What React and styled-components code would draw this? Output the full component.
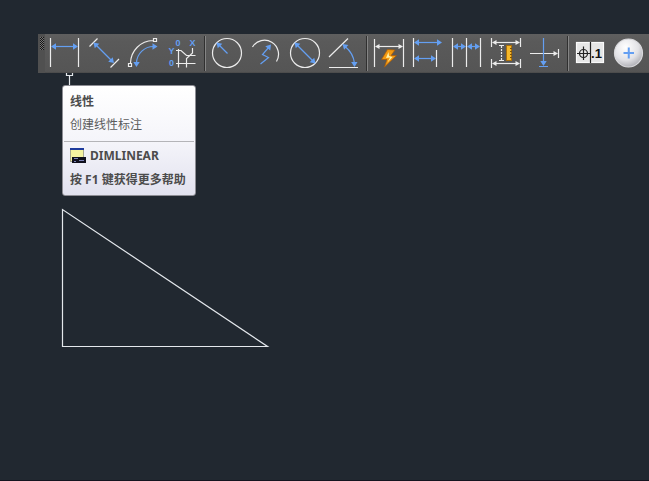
import React from "react";
import styled, { createGlobalStyle, ThemeProvider } from "styled-components";

const theme = {
  color: {
    canvas: "#212830",
    bar: "#5a5a5a",
    line: "#ececec",
    blue: "#649ff2",
    text: "#4c4c4c",
  },
};

const GlobalStyle = createGlobalStyle`
  body {
    background: ${theme.color.canvas};
    margin: 0;
  }
`;

const Workspace = styled.main`
  border-bottom: solid 1px #14141f;
  box-sizing: border-box;
  font-family: "Noto Sans", "Noto Sans CJK SC", sans-serif;
  min-height: 100vh;
  overflow: hidden;
  padding: 34px 0 0 38px;
  position: relative;
`;

const Drawing = styled.svg`
  height: 100%;
  left: 0;
  pointer-events: none;
  position: absolute;
  top: 0;
  width: 100%;
`;

const Toolbar = styled.div`
  background: linear-gradient(#5f5f5f, ${({ theme }) => theme.color.bar} 20%, #555 96%, #484848);
  display: flex;
  height: 39px;
  position: relative;
`;

const Grip = styled.div`
  background: #505050;
  box-sizing: border-box;
  flex: none;
  padding: 3px 2px;
  width: 7px;

  &::before {
    background: repeating-conic-gradient(#161616 0 25%, #757575 0 50%) 0 0 / 2px 2px;
    content: "";
    display: block;
    height: 13px;
    width: 4px;
  }
`;

const Separator = styled.div`
  background: #303030;
  border-right: solid 1px #858585;
  flex: none;
  margin: 2px 1px 2px 3px;
  width: 1px;
`;

const ToolItem = styled.div`
  flex: none;
  position: relative;
`;

const ToolButton = styled.button`
  background: none;
  border: none;
  cursor: pointer;
  display: block;
  height: 39px;
  padding: 0;
  width: 39px;
`;

const Icon = styled.svg`
  display: block;
  fill: none;
  height: 39px;
  stroke: ${({ theme }) => theme.color.line};
  stroke-width: 1.2;
  width: 39px;

  .blue {
    stroke: ${({ theme }) => theme.color.blue};
  }

  .head {
    fill: ${({ theme }) => theme.color.line};
    stroke: none;
  }

  .blue-head {
    fill: ${({ theme }) => theme.color.blue};
    stroke: none;
  }

  text {
    fill: ${({ theme }) => theme.color.blue};
    font: bold 9px "Liberation Sans", sans-serif;
    stroke: none;
    text-anchor: middle;
  }

  .value {
    fill: #111;
    font-size: 13px;
  }
`;

const Tooltip = styled.div`
  background: linear-gradient(#fff, #f5f5fa 50%, #e2e2ef);
  border: solid 1px #8d8d94;
  border-radius: 3px;
  box-sizing: border-box;
  color: ${({ theme }) => theme.color.text};
  font-size: 12px;
  left: 17px;
  line-height: 20px;
  padding: 6px 1px 5px;
  position: absolute;
  top: 51px;
  white-space: nowrap;
  width: 134px;
  z-index: 1;
`;

const TooltipTitle = styled.div`
  font-weight: 600;
  padding: 0 6px;
`;

const TooltipText = styled.div`
  color: #5c5c5c;
  padding: 3px 6px 0;
`;

const TooltipFooter = styled.div`
  border-top: solid 1px #b4b4b8;
  font-weight: 700;
  margin-top: 6px;
  padding: 4px 6px 0;
`;

const Command = styled.div`
  align-items: center;
  display: flex;
  gap: 4px;
  margin-bottom: 4px;
`;

const CommandIcon = styled.svg`
  flex: none;
  height: 16px;
  width: 16px;
`;

// Arrow head with its tip at x, y; an angle of 0 points right
const Head = ({ x, y, angle = 0, white }) => (
  <path
    className={white ? "head" : "blue-head"}
    d={white ? "M0 0L-4.5 -2.6V2.6Z" : "M0 0L-5 -3.2V3.2Z"}
    transform={`translate(${x} ${y}) rotate(${angle})`}
  />
);

const Span = ({ x1, x2, y, white }) => (
  <>
    <path className={white ? "" : "blue"} d={`M${x1 + 3} ${y}H${x2 - 3}`} />
    <Head angle={180} white={white} x={x1} y={y} />
    <Head white={white} x={x2} y={y} />
  </>
);

const groups = [
  [
    {
      label: "线性",
      hasTooltip: true,
      icon: (
        <>
          <path d="M5.5 4V33M33.5 4V33" />
          <Span x1={6} x2={33} y={12.5} />
        </>
      ),
    },
    {
      label: "对齐",
      icon: (
        <>
          <path d="M5.5 12.5L13.5 4.5M26.5 33.5L35 25" />
          <path className="blue" d="M12 11L28 27" />
          <Head angle={225} x={9.5} y={8.5} />
          <Head angle={45} x={30} y={29} />
        </>
      ),
    },
    {
      label: "弧长",
      icon: (
        <>
          <path d="M7.5 29A23 23 0 0 1 30 6.5M5.5 29.5h3v3h-3zM30.5 4.5h3v3h-3z" />
          <path className="blue" d="M13.5 29A17 17 0 0 1 31 12.5" />
          <Head angle={90} x={13.5} y={33} />
          <Head x={34.5} y={12.5} />
        </>
      ),
    },
    {
      label: "坐标",
      icon: (
        <>
          <path d="M16.5 15V33.5M14 16.5H19L24.5 21.5H33.5M14 29.5H33.5M24.5 33.5V24.5L30.5 19V14" />
          <text x="16" y="12">0</text>
          <text x="30.5" y="12">X</text>
          <text x="9.5" y="20">Y</text>
          <text x="9.5" y="32">0</text>
        </>
      ),
    },
  ],
  [
    {
      label: "半径",
      icon: (
        <>
          <circle cx="20" cy="19" r="14.5" />
          <path className="blue" d="M20.5 19.5L12 11" />
          <Head angle={225} x={9.5} y={8.5} />
        </>
      ),
    },
    {
      label: "折弯",
      icon: (
        <>
          <path d="M6.5 13A14 14 0 1 1 30.5 27.5" />
          <path className="blue" d="M14.5 30L22.5 23.5L16.5 20.5L23 13" />
          <Head angle={-50} x={25} y={10.5} />
        </>
      ),
    },
    {
      label: "直径",
      icon: (
        <>
          <circle cx="20" cy="19" r="14.5" />
          <path className="blue" d="M12 11L28 27" />
          <Head angle={225} x={9.5} y={8.5} />
          <Head angle={45} x={30.5} y={29.5} />
        </>
      ),
    },
    {
      label: "角度",
      icon: (
        <>
          <path d="M5 23L24 4.5M5 33.5H34" />
          <path className="blue" d="M21 12.5A25 25 0 0 1 30.5 29.5" />
          <Head angle={222} x={18.5} y={10} />
          <Head angle={88} x={30.5} y={33} />
        </>
      ),
    },
  ],
  [
    {
      label: "快速标注",
      icon: (
        <>
          <path d="M5.5 5V33M34.5 5V33" />
          <Span white x1={6} x2={34} y={12.5} />
          <path
            d="M18.5 15.5L26 16L22 21.5L27.5 21.5L15.5 33L18 25.5L12.5 25.5Z"
            fill="#f39a12"
            stroke="#a85a08"
            strokeWidth="0.7"
          />
          <path d="M19.5 18L17 24L21 23.5L18.5 28.5L23.5 23L20 22Z" fill="#fff3a8" stroke="none" />
        </>
      ),
    },
    {
      label: "基线",
      icon: (
        <>
          <path d="M5.5 4V33M28.5 16V33" />
          <Span x1={6} x2={34} y={8.5} />
          <Span x1={6} x2={28} y={24.5} />
        </>
      ),
    },
    {
      label: "连续",
      icon: (
        <>
          <path d="M5.5 4V33M19.5 4V33M33.5 4V33" />
          <Span x1={6} x2={19} y={12.5} />
          <Span x1={20} x2={33} y={12.5} />
        </>
      ),
    },
    {
      label: "等距标注",
      icon: (
        <>
          <path d="M5.5 4V13M34.5 4V13M5.5 25V34M34.5 25V34M13 11.5H18M13 26.5H18" />
          <path d="M15.5 12V26" strokeDasharray="2 1" />
          <Span white x1={6} x2={34} y={8.5} />
          <Span white x1={6} x2={34} y={29.5} />
          <rect fill="#f6b92a" height="15" stroke="#a96f0c" strokeWidth="1" width="5" x="20.5" y="11.5" />
          <path d="M24 14.5H26M24 17.5H26M24 20.5H26M24 23.5H26" stroke="#7d5208" strokeWidth="1" />
        </>
      ),
    },
    {
      label: "折断标注",
      icon: (
        <>
          <path d="M5 19.5H31M33.5 15V24" />
          <Head white x={33} y={19.5} />
          <path className="blue" d="M18.5 4V30M14 32.5H23" />
          <Head angle={90} x={18.5} y={32} />
        </>
      ),
    },
  ],
  [
    {
      label: "公差",
      icon: (
        <>
          <rect fill="#e6e6e6" height="20" stroke="#fafafa" width="27" x="6.5" y="8.5" />
          <path d="M20.5 8V29M7 19.5H20M13.5 12.5V26" stroke="#222" />
          <circle cx="13.5" cy="19.5" r="4" stroke="#222" />
          <text className="value" x="26.5" y="24">.1</text>
        </>
      ),
    },
    {
      label: "圆心标记",
      icon: (
        <>
          <defs>
            <radialGradient cx="0.4" cy="0.3" id="ball" r="0.75">
              <stop offset="0" stopColor="#fff" />
              <stop offset="0.6" stopColor="#e2e2e6" />
              <stop offset="1" stopColor="#a9a9af" />
            </radialGradient>
          </defs>
          <circle cx="19.5" cy="19" fill="url(#ball)" r="14" stroke="#d9d9dc" />
          <path className="blue" d="M14.5 19H25M19.75 13.5V24.5" strokeWidth="2" />
        </>
      ),
    },
  ],
];

const DimLinearTooltip = () => (
  <Tooltip id="dimlinear-tip" role="tooltip">
    <TooltipTitle>线性</TooltipTitle>
    <TooltipText>创建线性标注</TooltipText>
    <TooltipFooter>
      <Command>
        <CommandIcon aria-hidden="true" viewBox="0 0 16 16">
          <rect fill="#f5f3a0" height="13" stroke="#a8a890" width="13" x="0.5" y="0.5" />
          <path d="M0 0H14V2H0Z" fill="#1d3a9c" />
          <path d="M2 9H16V15H2Z" fill="#10101c" />
          <path d="M4 10.5H8M9 12.5H14M4 13.5H6" stroke="#7d84b8" />
        </CommandIcon>
        DIMLINEAR
      </Command>
      <div>按 F1 键获得更多帮助</div>
    </TooltipFooter>
  </Tooltip>
);

const App = () => (
  <ThemeProvider theme={theme}>
    <GlobalStyle />
    <Workspace>
      <Drawing aria-hidden="true" fill="none" stroke="#e4e8ec" strokeWidth="1.2">
        <path d="M62.5 209.5V346.5H267.5Z" />
        <path d="M66.5 73V75.5H72.5V73M69.5 75V86" />
      </Drawing>
      <Toolbar aria-label="标注" role="toolbar">
        <Grip />
        {groups.map((tools, index) => (
          <React.Fragment key={tools[0].label}>
            {index > 0 && <Separator />}
            {tools.map(({ label, icon, hasTooltip }) => (
              <ToolItem key={label}>
                <ToolButton
                  aria-describedby={hasTooltip ? "dimlinear-tip" : undefined}
                  aria-label={label}
                  type="button"
                >
                  <Icon aria-hidden="true" viewBox="0 0 39 39">
                    {icon}
                  </Icon>
                </ToolButton>
                {hasTooltip && <DimLinearTooltip />}
              </ToolItem>
            ))}
          </React.Fragment>
        ))}
      </Toolbar>
    </Workspace>
  </ThemeProvider>
);

export default App;
